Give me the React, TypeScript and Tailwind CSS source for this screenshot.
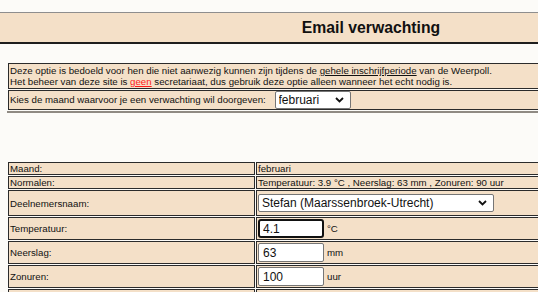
import { useState } from 'react'

const tan = 'bg-[#f4e0c8]'
const cell = `border border-[#2b2b2b] ${tan} px-[1px] py-0 align-middle`

function Chevron() {
  return (
    <svg width="9" height="6" viewBox="0 0 9 6" className="absolute right-[7px] top-1/2 -translate-y-1/2 pointer-events-none">
      <path d="M1 1 L4.5 4.5 L8 1" fill="none" stroke="#111" strokeWidth="1.8" />
    </svg>
  )
}

function FakeSelect({ value, width, options }: { value: string; width: string; options: string[] }) {
  const [v, setV] = useState(value)
  return (
    <span className={`relative inline-block align-middle ${width}`}>
      <select
        value={v}
        onChange={(e) => setV(e.target.value)}
        className="appearance-none w-full h-[18px] bg-white border border-[#767676] rounded-[2px] pl-[3px] pr-5 text-[12px] leading-[14px] text-[#111] outline-none"
      >
        {options.map((o) => (
          <option key={o} value={o}>{o}</option>
        ))}
      </select>
      <Chevron />
    </span>
  )
}

function NumInput({ value, unit, focused }: { value: string; unit: string; focused?: boolean }) {
  return (
    <div className="flex items-center">
      <input
        defaultValue={value}
        className={
          focused
            ? 'w-[66px] h-[19px] bg-white border-2 border-[#111] rounded-[3px] pl-[3px] text-[12px] text-[#111] outline-none'
            : 'w-[66px] h-[19px] bg-white border border-[#767676] rounded-[2px] pl-[4px] text-[12px] text-[#111] outline-none'
        }
      />
      <span className="ml-[3px]">{unit}</span>
    </div>
  )
}

const months = ['januari', 'februari', 'maart', 'april', 'mei', 'juni', 'juli', 'augustus', 'september', 'oktober', 'november', 'december']

export default function App() {
  return (
    <div
      className="h-[292px] w-full overflow-hidden bg-[#fcfbf8] text-[#111] text-[9.7px] leading-[11px]"
      style={{ fontFamily: '"Liberation Sans", Arial, sans-serif' }}
    >
      <div className={`mt-[12px] h-[32px] border-t border-[#8e8e8e] border-b-2 border-b-[#1e1e1e] ${tan} flex items-center`}>
        <div className="w-[742px] shrink-0 text-center text-[15.75px] font-bold leading-none">Email verwachting</div>
      </div>

      <table className="mt-[18px] ml-[7px] w-[640px] border-separate border-spacing-[1px] border-b-2 border-[#8f8a83]">
        <tbody>
          <tr>
            <td className={`${cell} h-[26px]`}>
              Deze optie is bedoeld voor hen die niet aanwezig kunnen zijn tijdens de{' '}
              <span className="underline">gehele inschrijfperiode</span> van de Weerpoll.
              <br />
              Het beheer van deze site is <span className="underline text-[#ff1a1a]">geen</span> secretariaat, dus
              gebruik deze optie alleen wanneer het echt nodig is.
            </td>
          </tr>
          <tr>
            <td className={`${cell} h-[20px]`}>
              <span className="mr-[6px]">Kies de maand waarvoor je een verwachting wil doorgeven:</span>{' '}
              <FakeSelect value="februari" width="w-[76px]" options={months} />
            </td>
          </tr>
        </tbody>
      </table>

      <table className="mt-[48px] ml-[7px] w-[700px] table-fixed border-separate border-spacing-[1px]">
        <tbody>
          <tr>
            <td className={`${cell} w-[247px] h-[13px]`}>Maand:</td>
            <td className={`${cell} h-[13px]`}>februari</td>
          </tr>
          <tr>
            <td className={`${cell} h-[13px]`}>Normalen:</td>
            <td className={`${cell} h-[13px]`}>Temperatuur: 3.9 °C , Neerslag: 63 mm , Zonuren: 90 uur</td>
          </tr>
          <tr>
            <td className={`${cell} h-[26px]`}>Deelnemersnaam:</td>
            <td className={`${cell} h-[26px]`}>
              <FakeSelect value="Stefan (Maarssenbroek-Utrecht)" width="w-[236px]" options={['Stefan (Maarssenbroek-Utrecht)']} />
            </td>
          </tr>
          <tr>
            <td className={`${cell} h-[23px]`}>Temperatuur:</td>
            <td className={`${cell} h-[23px]`}>
              <NumInput value="4.1" unit="°C" focused />
            </td>
          </tr>
          <tr>
            <td className={`${cell} h-[23px]`}>Neerslag:</td>
            <td className={`${cell} h-[23px]`}>
              <NumInput value="63" unit="mm" />
            </td>
          </tr>
          <tr>
            <td className={`${cell} h-[23px]`}>Zonuren:</td>
            <td className={`${cell} h-[23px]`}>
              <NumInput value="100" unit="uur" />
            </td>
          </tr>
          <tr>
            <td className={`${cell} h-[23px]`}></td>
            <td className={`${cell} h-[23px]`}></td>
          </tr>
        </tbody>
      </table>
    </div>
  )
}
